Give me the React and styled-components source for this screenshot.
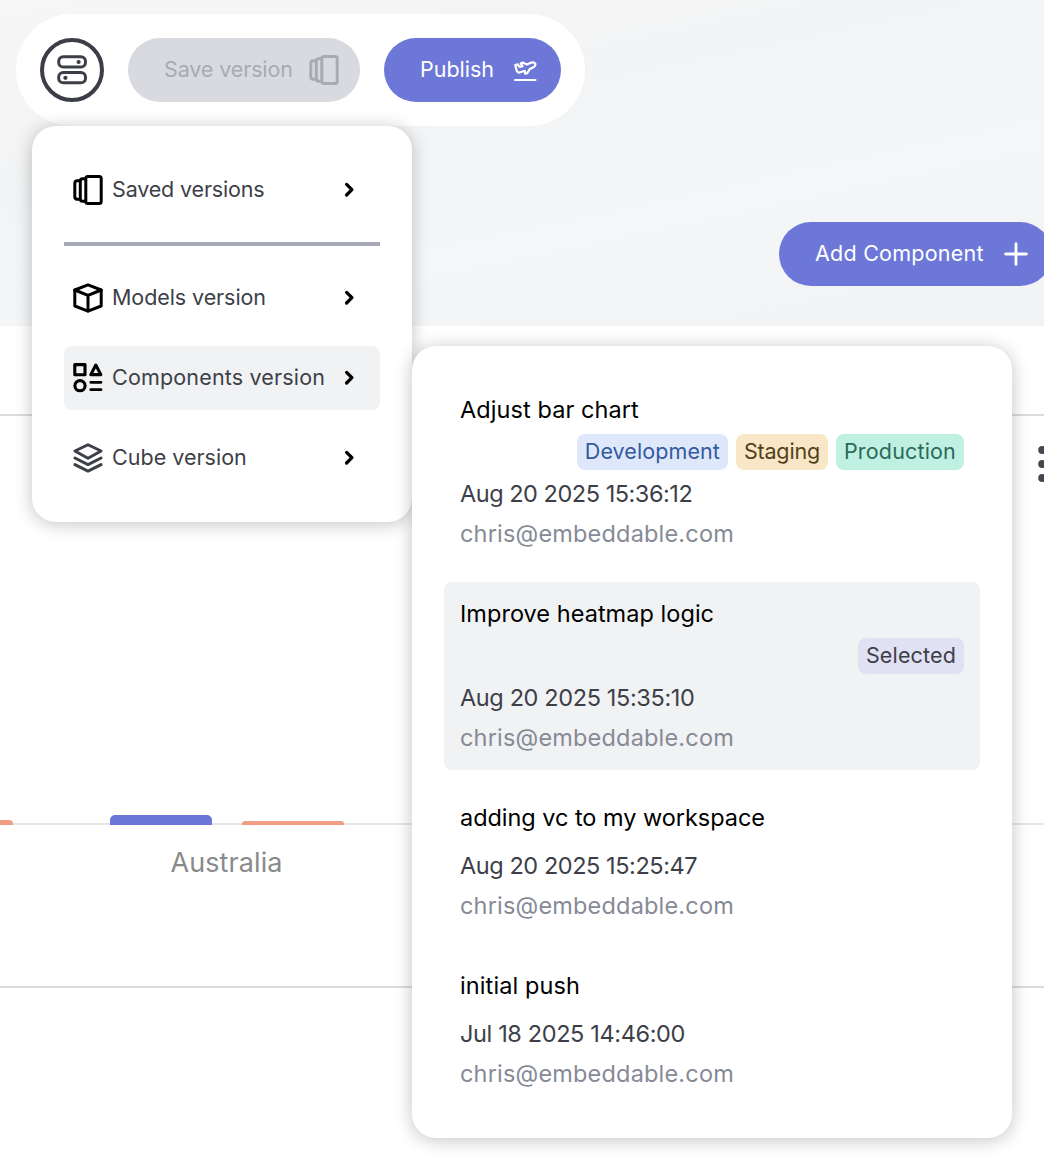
import React from "react";
import styled, { createGlobalStyle } from "styled-components";

const GlobalStyle = createGlobalStyle`
  *, *::before, *::after { box-sizing: border-box; }
  body {
    margin: 0;
    background: #fff;
    color: #3d3f48;
    font-family: Inter, "Liberation Sans", sans-serif;
  }
  button { font: inherit; border: 0; margin: 0; padding: 0; }
`;

const Page = styled.div`
  width: 1044px;
  height: 1176px;
  overflow: hidden;
  display: flex;
  flex-direction: column;
`;

/* ---------- header ---------- */

const Hero = styled.header`
  flex: none;
  height: 326px;
  padding: 14px 0 0 16px;
  display: flex;
  flex-direction: column;
  align-items: flex-start;
  background: linear-gradient(168deg, #f6f6f7 0%, #f3f4f5 35%, #f5f6f7 65%, #f2f3f5 100%);
`;

const Toolbar = styled.div`
  position: relative;
  z-index: 2;
  display: flex;
  gap: 24px;
  padding: 24px;
  border-radius: 56px;
  background: #fff;
`;

const RoundButton = styled.button`
  width: 64px;
  height: 64px;
  display: flex;
  align-items: center;
  justify-content: center;
  border: 4px solid #3c3e47;
  border-radius: 50%;
  background: #fff;
  color: #3c3e47;
`;

const PillButton = styled.button`
  width: ${(p) => p.$width}px;
  height: 64px;
  display: flex;
  align-items: center;
  justify-content: space-between;
  padding: 0 ${(p) => p.$end}px 0 36px;
  border-radius: 32px;
  font-size: 21.5px;
  line-height: 32px;
  white-space: nowrap;
  background: ${(p) => (p.disabled ? "#d9dadf" : "#6c77d8")};
  color: ${(p) => (p.disabled ? "#a8aab5" : "#fff")};
`;

const HeroActions = styled.div`
  align-self: flex-end;
  margin: 96px -8px 0 0;
`;

const Tracked = styled.span`
  letter-spacing: ${(p) => p.$track || 0}px;
`;

const PillLabel = styled(Tracked)`
  margin-bottom: 2px;
`;

/* ---------- dropdown menus ---------- */

const Panel = styled.div`
  position: absolute;
  border-radius: 24px;
  background: #fff;
  box-shadow: 0 2px 18px rgba(0, 0, 0, 0.24);
`;

const MenuPanel = styled(Panel)`
  top: 112px;
  left: 16px;
  width: 380px;
  padding: 32px;
`;

const MenuGroup = styled.div`
  display: flex;
  flex-direction: column;
  gap: 16px;
`;

const MenuDivider = styled.hr`
  height: 4px;
  margin: 20px 0;
  border: 0;
  background: #a6a9b5;
`;

const MenuRow = styled.div`
  height: 64px;
  display: flex;
  align-items: center;
  gap: 8px;
  padding: 0 23px 0 8px;
  border-radius: 8px;
  background: ${(p) => (p.$active ? "#f1f2f4" : "transparent")};
  color: #000;
`;

const MenuIcon = styled.span`
  display: flex;
  color: ${(p) => (p.$muted ? "#3d3f48" : "#000")};
`;

const MenuLabel = styled(Tracked)`
  flex: 1;
  min-width: 0;
  margin-bottom: 2px;
  font-size: 21.5px;
  line-height: 32px;
  white-space: nowrap;
  color: #3d3f48;
`;

const VersionPanel = styled(Panel)`
  top: 220px;
  left: 380px;
  width: 600px;
  padding: 32px;
  display: flex;
  flex-direction: column;
  gap: 16px;
`;

const VersionCard = styled.div`
  display: flex;
  flex-direction: column;
  gap: 8px;
  padding: 16px;
  border-radius: 8px;
  font-size: 23.5px;
  line-height: 32px;
  background: ${(p) => (p.$active ? "#f1f2f4" : "transparent")};
`;

const VersionTitle = styled(Tracked)`
  color: #000;
`;

const VersionDate = styled(Tracked)`
  color: #3d3f48;
`;

const VersionAuthor = styled(Tracked)`
  color: #868a96;
`;

const Badges = styled.div`
  display: flex;
  justify-content: flex-end;
  gap: 8px;
`;

const tones = {
  blue: { bg: "#dfe8fa", fg: "#345a9e" },
  amber: { bg: "#f9e6c6", fg: "#523f18" },
  green: { bg: "#bff0e2", fg: "#2b6b59" },
  violet: { bg: "#e1e1f4", fg: "#3d3f48" },
};

const Badge = styled(Tracked)`
  height: 36px;
  padding: 0 8px;
  border-radius: 8px;
  font-size: 21.5px;
  line-height: 34px;
  background: ${(p) => tones[p.$tone].bg};
  color: ${(p) => tones[p.$tone].fg};
`;

/* ---------- chart ---------- */

const ChartCard = styled.section`
  flex: none;
  width: 1052px;
  height: 574px;
  margin-top: 88px;
  display: flex;
  flex-direction: column;
  border-top: 2px solid #dcdcdd;
  border-bottom: 2px solid #dcdcdd;
`;

const ChartHeader = styled.div`
  display: flex;
  justify-content: flex-end;
  padding: 28px 0 0;
`;

const Plot = styled.div`
  flex: 1;
  display: flex;
  align-items: flex-end;
  margin-left: -89px;
  border-bottom: 2px solid #e6e6e7;
`;

const Bar = styled.div`
  flex: none;
  width: 102px;
  height: ${(p) => p.$height}px;
  margin: 0 ${(p) => p.$after}px -2px 0;
  border-radius: ${(p) => Math.min(5, p.$height - 1)}px ${(p) => Math.min(5, p.$height - 1)}px 0 0;
  background: ${(p) => p.$color};
`;

const Axis = styled.div`
  height: 161px;
  padding: 20px 0 0 110px;
`;

const AxisLabel = styled.div`
  width: 233px;
  text-align: center;
  font-size: 27px;
  line-height: 36px;
  letter-spacing: 0.1px;
  color: #8a8a8a;
`;

/* ---------- icons ---------- */

const Icon = ({ size = 32, stroke = 3, children }) => (
  <svg
    width={size}
    height={size}
    viewBox={`0 0 ${size} ${size}`}
    fill="none"
    stroke="currentColor"
    strokeWidth={stroke}
    strokeLinecap="round"
    strokeLinejoin="round"
    aria-hidden="true"
  >
    {children}
  </svg>
);

const TogglesIcon = () => (
  <Icon>
    <rect x="2.7" y="2.8" width="26.8" height="10.2" rx="4.6" />
    <rect x="2.7" y="18.5" width="26.8" height="10.3" rx="4.6" />
    <circle cx="22.6" cy="8" r="2.1" fill="currentColor" stroke="none" />
    <circle cx="9.4" cy="23.8" r="2.1" fill="currentColor" stroke="none" />
  </Icon>
);

const VersionsIcon = () => (
  <Icon>
    <rect x="13.8" y="2.5" width="15.4" height="27" rx="2" />
    <path d="M12.6 4.7H10.6Q8.3 4.9 8.3 7V25Q8.3 27.1 10.6 27.3H12.6" />
    <path d="M7.2 6.7H5.2Q2.8 6.9 2.8 9.2V22.8Q2.8 25.1 5.2 25.3H7.2" />
  </Icon>
);

const CubeIcon = () => (
  <Icon>
    <path d="M16 2.8 29.2 8V24L16 29.1 2.8 24V8Z" />
    <path d="M2.8 8 16 13.4 29.2 8M16 13.4V29" />
  </Icon>
);

const ShapesIcon = () => (
  <Icon stroke={3.1}>
    <rect x="2.8" y="2.6" width="10.2" height="10.2" />
    <path d="M23.8 3 28.8 12.6H18.8Z" />
    <circle cx="8" cy="23.7" r="5.1" />
    <path d="M18.8 20.3H29M18.8 27.7H29" strokeWidth="2.8" />
  </Icon>
);

const LayersIcon = () => (
  <Icon stroke={2.9}>
    <path d="M16 2.8 29.1 9 16 16.2 2.9 9Z" />
    <path d="M2.9 16 16 22.6 29.1 16M2.9 22.6 16 29.1 29.1 22.6" />
  </Icon>
);

const PlaneIcon = () => (
  <Icon size={24} stroke={2.2}>
    <path d="M2.3 7 4.6 6.4 6.6 8.9 9.6 8.2 7.6 5.6 9.4 4.5 14 6.6 18.4 4.6Q21.2 3.9 22.2 5.5 23 7.5 20.4 9.3L16.8 11 14.2 15.2 12.2 15.8 11.8 12.8 6.6 14.5Q4.8 14.8 3.8 13Z" />
    <path d="M2 22H22.4" />
  </Icon>
);

const PlusIcon = () => (
  <Icon size={24} stroke={2.8}>
    <path d="M12 1.6V22.4M1.6 12H22.4" />
  </Icon>
);

const ChevronIcon = () => (
  <Icon size={16} stroke={3.3}>
    <path d="M5.6 2.4 10.9 7.7 5.6 13" />
  </Icon>
);

const KebabIcon = () => (
  <svg width="16" height="40" viewBox="0 0 16 40" fill="#48464f" aria-hidden="true">
    <circle cx="6.2" cy="6" r="4" />
    <circle cx="6.2" cy="20" r="4" />
    <circle cx="6.2" cy="34" r="4" />
  </svg>
);

/* ---------- content ---------- */

const versionRows = [
  { label: "Models version", track: -0.08, icon: <CubeIcon /> },
  { label: "Components version", track: 0.17, icon: <ShapesIcon />, active: true },
  { label: "Cube version", track: 0.02, icon: <LayersIcon />, muted: true },
];

const history = [
  {
    title: ["Adjust bar chart", 0.08],
    badges: [
      ["Development", "blue", 0.08],
      ["Staging", "amber", -0.18],
      ["Production", "green", 0.17],
    ],
    date: ["Aug 20 2025 15:36:12", -0.47],
  },
  {
    title: ["Improve heatmap logic", 0.04],
    badges: [["Selected", "violet", 0.15]],
    date: ["Aug 20 2025 15:35:10", -0.37],
    active: true,
  },
  { title: ["adding vc to my workspace", -0.04], badges: [], date: ["Aug 20 2025 15:25:47", -0.43] },
  { title: ["initial push", 0.11], badges: [], date: ["Jul 18 2025 14:46:00", -0.37] },
];

const MenuItem = ({ icon, label, track, active, muted }) => (
  <MenuRow $active={active}>
    <MenuIcon $muted={muted}>{icon}</MenuIcon>
    <MenuLabel $track={track}>{label}</MenuLabel>
    <ChevronIcon />
  </MenuRow>
);

export default function App() {
  return (
    <>
      <GlobalStyle />
      <Page>
        <Hero>
          <Toolbar>
            <RoundButton aria-label="Version control">
              <TogglesIcon />
            </RoundButton>
            <PillButton $width={232} $end={20} disabled>
              <PillLabel $track={-0.12}>Save version</PillLabel>
              <VersionsIcon />
            </PillButton>
            <PillButton $width={177} $end={24}>
              <PillLabel $track={0}>Publish</PillLabel>
              <PlaneIcon />
            </PillButton>

            <MenuPanel>
              <MenuItem icon={<VersionsIcon />} label="Saved versions" track={-0.16} />
              <MenuDivider />
              <MenuGroup>
                {versionRows.map((row) => (
                  <MenuItem key={row.label} {...row} />
                ))}
              </MenuGroup>

              <VersionPanel>
                {history.map(({ title, badges, date, active }) => (
                  <VersionCard key={title[0]} $active={active}>
                    <VersionTitle $track={title[1]}>{title[0]}</VersionTitle>
                    <Badges>
                      {badges.map(([name, tone, track]) => (
                        <Badge key={name} $tone={tone} $track={track}>
                          {name}
                        </Badge>
                      ))}
                    </Badges>
                    <VersionDate $track={date[1]}>{date[0]}</VersionDate>
                    <VersionAuthor $track={0.18}>chris@embeddable.com</VersionAuthor>
                  </VersionCard>
                ))}
              </VersionPanel>
            </MenuPanel>
          </Toolbar>

          <HeroActions>
            <PillButton $width={273} $end={24}>
              <PillLabel $track={0.24}>Add Component</PillLabel>
              <PlusIcon />
            </PillButton>
          </HeroActions>
        </Hero>

        <ChartCard>
          <ChartHeader>
            <KebabIcon />
          </ChartHeader>
          <Plot>
            <Bar $height={5} $after={97} $color="#f19d85" />
            <Bar $height={10} $after={30} $color="#6b78d8" />
            <Bar $height={4} $after={0} $color="#f19d85" />
          </Plot>
          <Axis>
            <AxisLabel>Australia</AxisLabel>
          </Axis>
        </ChartCard>
      </Page>
    </>
  );
}
